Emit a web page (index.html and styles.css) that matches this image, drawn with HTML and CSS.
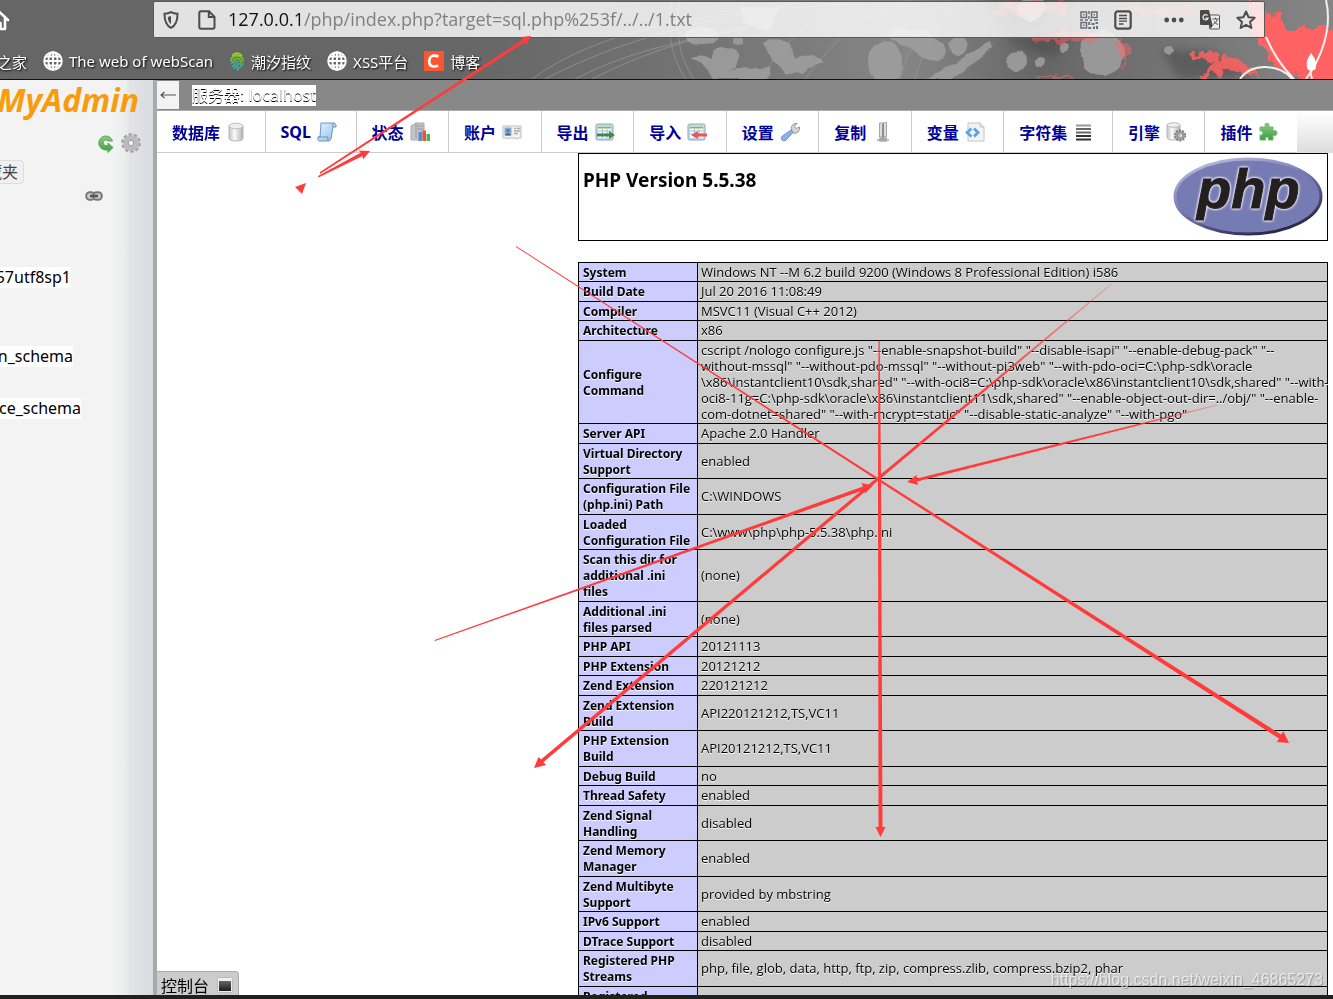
FILE: index.html
```html
<!DOCTYPE html>
<html lang="zh-CN">
<head>
<meta charset="utf-8">
<title>phpMyAdmin</title>
<link rel="stylesheet" href="styles.css">
</head>
<body>
<svg class="defs" width="0" height="0" aria-hidden="true">
  <defs>
    <linearGradient id="metal" x1="0" x2="1" y1="0" y2="0"><stop offset="0" stop-color="#c4c4c4"/><stop offset=".4" stop-color="#fafafa"/><stop offset="1" stop-color="#b0b0b0"/></linearGradient>
    <linearGradient id="blue" x1="0" x2="1" y1="0" y2="1"><stop offset="0" stop-color="#e8f3fd"/><stop offset="1" stop-color="#8fbdea"/></linearGradient>
    <linearGradient id="green" x1="0" x2="0" y1="0" y2="1"><stop offset="0" stop-color="#8ccf84"/><stop offset="1" stop-color="#3f9a3f"/></linearGradient>
    <symbol id="globe" viewBox="0 0 20 20"><g fill="none" stroke="#fff" stroke-width="1.900"><circle cx="10" cy="10" r="8.800"/><ellipse cx="10" cy="10" rx="4.600" ry="8.800"/><path d="M10 1v18M1 10h18M2.800 5.500h14.400M2.800 14.500h14.400"/></g></symbol>
    <symbol id="sheet" viewBox="0 0 20 20"><rect x="1" y="2" width="17" height="16" rx="1.500" fill="#c3d6ea" stroke="#88a9cb"/><rect x="3" y="4" width="13" height="12" fill="#fff"/><path d="M3 5.500h13" stroke="#83b95e" stroke-width="2"/><path d="M3 9h13M3 12h13M7.500 7v9M12 7v9" stroke="#9ebcdb"/></symbol>
  </defs>
</svg>

<header class="browser">
  <svg class="art" viewBox="0 0 1333 79" preserveAspectRatio="xMaxYMin slice" aria-hidden="true">
    <defs>
      <linearGradient id="haze" x1="0" x2="1" y1="0" y2="0"><stop offset="0" stop-color="#666"/><stop offset=".34" stop-color="#666"/><stop offset=".52" stop-color="#737373"/><stop offset=".68" stop-color="#858585"/><stop offset=".78" stop-color="#666"/><stop offset="1" stop-color="#858585"/></linearGradient>
      <filter id="rough" x="-20%" y="-20%" width="140%" height="140%"><feTurbulence type="fractalNoise" baseFrequency=".06" numOctaves="2" seed="4"/><feDisplacementMap in="SourceGraphic" scale="7" xChannelSelector="R" yChannelSelector="G"/></filter>
      <filter id="torn" x="-20%" y="-20%" width="140%" height="140%"><feTurbulence type="fractalNoise" baseFrequency=".12" numOctaves="3" seed="7"/><feDisplacementMap in="SourceGraphic" scale="16" xChannelSelector="R" yChannelSelector="G"/><feGaussianBlur stdDeviation=".7"/></filter>
      <filter id="soft"><feGaussianBlur stdDeviation="4"/></filter>
    </defs>
    <rect width="1333" height="79" fill="url(#haze)"/>
    <path d="M985 0l95 0-50 30-20 10zM1005 42l70-15-20 30zM1180 79l-20-29 50 0 45 29z" fill="#444" opacity=".5" filter="url(#soft)"/>
    <g fill="none" stroke="#a0a0a0" opacity=".6">
      <path d="M532 79C600 30 700 10 860 4M545 79C640 30 720 20 800 2M575 79C640 45 700 40 780 18M592 79c60-30 100-40 150-50M672 0c-6 30 0 60 14 79M680 0c-6 30 0 60 14 79M760 79C800 20 830 10 850 0M805 79C850 20 880 5 930-5M900 79c10-40 30-60 60-90M915 79c10-40 30-60 60-90"/>
    </g>
    <g fill="#a0a0a0" opacity=".85" filter="url(#rough)">
      <ellipse cx="702" cy="36" rx="16" ry="10"/><circle cx="738" cy="41" r="5"/><path d="M692 57q8-4 20 2q0-12 12-13q16 0 13 18q0 6-14 7l34-4 14 1-3 11h-54q-8-14-22-22z"/><path d="M764 43q14-9 24-1l8 15 16-2 12 8-16 4-5 6-16 1-16-14z"/><ellipse cx="885" cy="62" rx="17" ry="21"/><path d="M890 30q30-4 46 8q18 14 6 20q-12 4-22-3l-30-16z"/><circle cx="958" cy="46" r="9"/><path d="M978 48l12-6 2 6-39 31h-26z"/><circle cx="1017" cy="61" r="10"/><circle cx="1040" cy="63" r="5"/><circle cx="1064" cy="48" r="5"/><circle cx="1102" cy="53" r="22"/><circle cx="1168" cy="51" r="5"/>
      <circle cx="1032" cy="8" r="13"/><path d="M740 8h40l-10 22-28-8z"/>
    </g>
    <g fill="#ff6262" filter="url(#torn)">
      <path d="M1000 2h70l-5 12-55 0-20 3z" opacity=".45"/><path d="M1025 38l40-8 40 3-8 8-40 1zM1110 8h115l-40 8-60-4z" opacity=".5"/>
      <path d="M1250 0q26 16 40 28l50 0v58h-34l-8-10-22-8-12-20-14-18z"/><path d="M1188 52l30 2 22 8 22 16-18-4-16-4-28 10 4-9 10-7-26-8z" opacity=".85"/>
      <path d="M1032 80l30-5 25 6zM1115 36l16 12-6 20z" opacity=".5"/>
    </g>
    <g fill="none" stroke="#f0f0f0" stroke-width="2"><path d="M1326 0c7 30-6 60-20 79M1266 37q10 24 28 42M1240 79c12-17 40-15 52 0M1312 79q-3-10-1-20"/></g>
    <path d="M1311 53q8 10 4 17h-7q-4-7 3-17z" fill="#fff"/>
  </svg>

  <div class="toolbar">
    <a class="home" href="#" aria-label="主页"><svg width="22" height="22" viewBox="0 0 22 22"><path d="M2 11l9-8.500 9 8.500M5 9.500V20h4.500v-6h3v6H17V9.500" fill="none" stroke="#fff" stroke-width="2.600" stroke-linejoin="round" stroke-linecap="round"/></svg></a>
    <div class="urlbox">
      <svg width="16" height="18" viewBox="0 0 16 18"><path d="M8 1.200c2 1.200 4 1.500 6.500 1.500C14.500 10 13 14.500 8 16.800 3 14.500 1.500 10 1.500 2.700 4 2.700 6 2.400 8 1.200z" fill="none" stroke="#4d4d4d" stroke-width="2"/><path d="M8 5v8c-2.200-1.500-3-3.500-3.200-7z" fill="#4d4d4d"/></svg>
      <svg class="page-ico" width="18" height="20" viewBox="0 0 18 20"><path d="M3 1.300h8l5.500 5.500V17q0 1.700-1.700 1.700H3Q1.300 18.700 1.300 17V3Q1.300 1.300 3 1.300zM10.800 1.500V7h5.500" fill="none" stroke="#4d4d4d" stroke-width="2"/></svg>
      <div class="url" role="textbox" aria-label="地址"><span class="host">127.0.0.1</span>/php/index.php?target=sql.php%253f/../../1.txt</div>
      <div class="tools">
        <button aria-label="二维码"><svg width="18" height="18" viewBox="0 0 18 18"><g fill="none" stroke="#6a707a" stroke-width="1.500"><path d="M1 1h5.500v5.500H1zM11.500 1H17v5.500h-5.500zM1 11.500h5.500V17H1z"/></g><path d="M3 3h1.500v1.500H3zM13.500 3H15v1.500h-1.500zM3 13.500h1.500V15H3zM8.200 0h1.500v3H8.200zM8.200 5h1.500v3H8.200zM0 8.200h3v1.500H0zM5 8.200h3v1.500H5zM10 8.200h2v2h-2zM14 8.200h4v1.500h-4zM8.200 11h2v3h-2zM11.500 12h3v2h-3zM15.500 11H18v2h-2.500zM8.200 16h3v2h-3zM13 15.500h2V18h-2zM16 15h2v3h-2z" fill="#6a707a"/></svg></button>
        <button aria-label="阅读模式"><svg width="18" height="20" viewBox="0 0 18 20"><rect x="1.300" y="1.300" width="15.400" height="17.400" rx="2.500" fill="none" stroke="#4d4d4d" stroke-width="2.200"/><path d="M5 5.500h8M5 8.500h8M5 11.200h8M5 14h4.500" stroke="#4d4d4d" stroke-width="1.300"/></svg></button>
        <button class="dots" aria-label="更多"><svg width="20" height="6" viewBox="0 0 20 6"><circle cx="2.700" cy="3" r="2.400" fill="#4d4d4d"/><circle cx="10" cy="3" r="2.400" fill="#4d4d4d"/><circle cx="17.300" cy="3" r="2.400" fill="#4d4d4d"/></svg></button>
        <button aria-label="翻译"><svg width="20" height="20" viewBox="0 0 20 20"><rect x="9.500" y="5" width="10" height="14" rx="1" fill="#ececec" stroke="#555"/><path d="M1 0h8l3.500 15H1Q0 15 0 14V1Q0 0 1 0z" fill="#4a4a4a"/><path d="M10 15h3l-2.500 4z" fill="#333"/><path d="M7.500 5.500A2.600 2.600 0 1 0 8 8.200H5.500" fill="none" stroke="#eee" stroke-width="1.300"/><path d="M12.500 9h6M15.500 7.500V9M17.500 9q-.8 4-4.500 5.500M14 11q1.500 3 4 3.500" fill="none" stroke="#555"/></svg></button>
        <button aria-label="收藏"><svg width="20" height="20" viewBox="0 0 20 20"><path d="M10 1.500l2.500 5.700 6.200.6-4.700 4.100 1.400 6.100L10 14.800 4.600 18 6 11.900 1.300 7.800l6.200-.6z" fill="none" stroke="#4d4d4d" stroke-width="2" stroke-linejoin="round"/></svg></button>
      </div>
    </div>
  </div>

  <nav class="bookmarks" aria-label="书签">
    <a class="first" href="#">之家</a>
    <a href="#"><svg width="20" height="20"><use href="#globe"/></svg>The web of webScan</a>
    <a href="#"><svg width="16" height="20" viewBox="0 0 16 20"><g fill="none" stroke-width="1.500"><path d="M3 4.500q5-5 10 0M2 8q6-8 12 0" stroke="#b3cf19"/><path d="M2 11q0-6 6-6t6 6M4.200 12q0-4.500 3.800-4.500t3.800 4.500" stroke="#6fc22e"/><path d="M2 13q1.500-.5 2-2M6 13q0-3 2-3t2 4M8 12v5M12 12q0 2-1 5M14 12q0 2-.8 3" stroke="#3fb67a"/><path d="M3 15.500q2-.5 3-2.500M5 18q1-1 1.500-3M8 19.500l2-3" stroke="#2fb4c4"/></g></svg>潮汐指纹</a>
    <a href="#"><svg width="20" height="20"><use href="#globe"/></svg>XSS平台</a>
    <a href="#"><svg width="20" height="20" viewBox="0 0 20 20"><rect width="20" height="20" fill="#fc5531"/><path d="M14.500 5.500Q6 2.500 5.200 10q-.3 7.500 9 4.800" fill="none" stroke="#fff" stroke-width="2.600"/></svg>博客</a>
  </nav>
</header>

<div class="app">
  <aside class="side">
    <div class="logo">MyAdmin</div>
    <div class="side-icons">
      <button aria-label="刷新"><svg width="18" height="20" viewBox="0 0 18 20"><path d="M15.500 8A7 7 0 1 0 8 17h3v2.500l5-5-5-4.500v2.500H8.500A2.800 2.800 0 1 1 11.200 8z" fill="url(#green)" stroke="#5ba75b"/></svg></button>
      <button aria-label="设置"><svg width="20" height="20" viewBox="0 0 20 20"><circle cx="10" cy="10" r="8.500" fill="none" stroke="#a0a0a0" stroke-width="2.600" stroke-dasharray="3.340 2"/><circle cx="10" cy="10" r="5.500" fill="none" stroke="#bcbcbc" stroke-width="5"/><circle cx="10" cy="10" r="2.800" fill="#f3f3f3" stroke="#999"/></svg></button>
    </div>
    <div class="fav"><button>收藏夹</button></div>
    <div class="link"><svg width="18" height="10" viewBox="0 0 18 10"><rect x="1.200" y="1.200" width="8.500" height="7.600" rx="3.600" fill="#ccc" stroke="#777" stroke-width="2"/><rect x="8.300" y="1.200" width="8.500" height="7.600" rx="3.600" fill="#ccc" stroke="#777" stroke-width="2"/><path d="M5 5h8" stroke="#555" stroke-width="2.600"/></svg></div>
    <ul class="dbs">
      <li class="db-a"><a href="#">57utf8sp1</a></li>
      <li class="db-b"><a href="#">n_schema</a></li>
      <li class="db-c"><a href="#">ce_schema</a></li>
    </ul>
  </aside>

  <main class="main">
    <div class="crumbs"><button class="back" aria-label="后退"><svg width="16" height="8" viewBox="0 0 16 8"><path d="M1 4h15M4.500 1L1 4l3.500 3" fill="none" stroke="#555" stroke-width="1.200"/></svg></button><a href="#">服务器: localhost</a></div>

    <div class="tabbar">
      <ul class="tabs">
        <li><a href="#">数据库<svg width="20" height="20" viewBox="0 0 20 20"><path d="M3 4v12q0 3 7 3t7-3V4z" fill="url(#metal)" stroke="#b5b5b5"/><ellipse cx="10" cy="4" rx="7" ry="2.800" fill="#eee" stroke="#bbb"/></svg></a></li>
        <li><a href="#">SQL<svg width="20" height="20" viewBox="0 0 20 20"><path d="M4 1h13q3 1 2 4h-3l-2 12q-1 2-3 2H2q-2-1-1-4h2z" fill="url(#blue)" stroke="#6796c4"/><path d="M16 5q-1-3 1-4M1 15h10q-1 4 1 4" fill="none" stroke="#6796c4"/></svg></a></li>
        <li><a href="#">状态<svg width="20" height="20" viewBox="0 0 20 20"><path d="M1 4l5-3h8v15l-4 2H1z" fill="#c4c4c4" stroke="#aaa"/><path d="M6 1v15M7 4h6M7 7h6" stroke="#999"/><path d="M8.500 10h3.500v9H8.500z" fill="#4f8fe0"/><path d="M12.500 8.500H16V19h-3.500z" fill="#f0503a"/><path d="M16.500 12H20v7h-3.500z" fill="#4cae4c"/></svg></a></li>
        <li><a href="#">账户<svg width="20" height="20" viewBox="0 0 20 20"><path d="M1 4h18v12h-3l-1 1-2-1H7l-1 1-2-1H1z" fill="#f2f2f2" stroke="#bdbdbd"/><rect x="2.500" y="5.500" width="7" height="8" fill="#75aee8"/><circle cx="6" cy="8.500" r="1.800" fill="#a86b3c"/><path d="M3 13.500q3-5 6 0z" fill="#3b669d"/><path d="M12 6.500h2M15 6.500h3M12 9h6M12 11.500h4" stroke="#aaa" stroke-width="1.500"/></svg></a></li>
        <li><a href="#">导出<svg width="20" height="20" viewBox="0 0 20 20"><use href="#sheet"/><path d="M2 11.500h12V9l6 4-6 4v-2.500H2z" fill="#438a46"/></svg></a></li>
        <li><a href="#">导入<svg width="20" height="20" viewBox="0 0 20 20"><use href="#sheet"/><path d="M20 11.500h-9V9l-7 4 7 4v-2.500h9z" fill="#ee5555"/></svg></a></li>
        <li><a href="#">设置<svg width="20" height="20" viewBox="0 0 20 20"><path d="M12 9a5 5 0 0 1 3-7.500l2 0-2.500 3 1.500 2 3.500-1.500a5 5 0 0 1-6.500 6z" fill="#d4d4d4" stroke="#999"/><path d="M11 8l2 2.500-7.500 8q-2 1-4-1-.8-2 .7-3.300z" fill="#8bb1ec" stroke="#6590d0"/></svg></a></li>
        <li><a href="#">复制<svg width="20" height="20" viewBox="0 0 20 20"><path d="M7.500 1h3v14h-3zM11.500 0h3v15h-3z" fill="#ddd" stroke="#a5a5a5"/><path d="M11 2v16" stroke="#777"/><path d="M5 18h12M8 16h6v3H8z" stroke="#aaa" stroke-width="1.500" fill="#999"/></svg></a></li>
        <li><a href="#">变量<svg width="20" height="20" viewBox="0 0 20 20"><path d="M3 1h12l4 4v14H3z" fill="#f3f3f3" stroke="#c4c4c4"/><path d="M15 1v4h4" fill="none" stroke="#c4c4c4"/><path d="M6.500 6.500L2 10.500l4.500 4M9 6.500l4 4-4 4" fill="none" stroke="#57a3ea" stroke-width="2.800"/></svg></a></li>
        <li><a href="#">字符集<svg width="20" height="20" viewBox="0 0 20 20"><path d="M3 3.500h15" stroke="#999" stroke-width="2"/><path d="M3 7h15M3 10.500h15" stroke="#666" stroke-width="2"/><path d="M3 14h15M3 17.500h15" stroke="#333" stroke-width="2"/></svg></a></li>
        <li><a href="#">引擎<svg width="20" height="20" viewBox="0 0 20 20"><path d="M1 3v12q0 3 6 3t7-3V3z" fill="url(#metal)" stroke="#b5b5b5"/><ellipse cx="7.500" cy="3" rx="6.500" ry="2.300" fill="#eee" stroke="#bbb"/><circle cx="14" cy="13.500" r="5.200" fill="none" stroke="#777" stroke-width="1.800" stroke-dasharray="2.100 1.160"/><circle cx="14" cy="13.500" r="3.300" fill="none" stroke="#999" stroke-width="2.800"/></svg></a></li>
        <li><a href="#">插件<svg width="20" height="20" viewBox="0 0 20 20"><path d="M2 5h5.500Q6 1.500 9 1.200 12 1.500 10.500 5H15v4q4-1.500 4 2t-4 2v5h-4.500q1-3-1.500-3t-1.500 3H2v-5q3 1 3-2T2 9z" fill="url(#green)" stroke="#6fb96b"/></svg></a></li>
      </ul>
    </div>

    <div class="content">
      <div class="phpinfo">
        <div class="title"><h1>PHP Version 5.5.38</h1>
          <svg width="150" height="80" viewBox="0 0 150 80" role="img" aria-label="PHP">
            <defs><linearGradient id="rim" x1=".2" y1="0" x2=".8" y2="1"><stop offset="0" stop-color="#b9bddc"/><stop offset=".45" stop-color="#7478b4"/><stop offset="1" stop-color="#1d1d38"/></linearGradient></defs>
            <ellipse cx="75" cy="39.500" rx="73" ry="37.500" fill="#777bb3" stroke="url(#rim)" stroke-width="3"/>
            <text class="php-word" x="24" y="51">php</text>
          </svg>
        </div>
        <table>
          <colgroup><col class="key"><col></colgroup>
          <tbody>
          <tr><th scope="row">System</th><td>Windows NT --M 6.2 build 9200 (Windows 8 Professional Edition) i586</td></tr>
          <tr><th scope="row">Build Date</th><td>Jul 20 2016 11:08:49</td></tr>
          <tr><th scope="row">Compiler</th><td>MSVC11 (Visual C++ 2012)</td></tr>
          <tr><th scope="row">Architecture</th><td>x86</td></tr>
          <tr><th scope="row">Configure<br>Command</th><td>cscript /nologo configure.js "--enable-snapshot-build" "--disable-isapi" "--enable-debug-pack" "--<br>without-mssql" "--without-pdo-mssql" "--without-pi3web" "--with-pdo-oci=C:\php-sdk\oracle<br>\x86\instantclient10\sdk,shared" "--with-oci8=C:\php-sdk\oracle\x86\instantclient10\sdk,shared" "--with-<br>oci8-11g=C:\php-sdk\oracle\x86\instantclient11\sdk,shared" "--enable-object-out-dir=../obj/" "--enable-<br>com-dotnet=shared" "--with-mcrypt=static" "--disable-static-analyze" "--with-pgo"</td></tr>
          <tr><th scope="row">Server API</th><td>Apache 2.0 Handler</td></tr>
          <tr><th scope="row">Virtual Directory<br>Support</th><td>enabled</td></tr>
          <tr><th scope="row">Configuration File<br>(php.ini) Path</th><td>C:\WINDOWS</td></tr>
          <tr><th scope="row">Loaded<br>Configuration File</th><td>C:\www\php\php-5.5.38\php.ini</td></tr>
          <tr><th scope="row">Scan this dir for<br>additional .ini<br>files</th><td>(none)</td></tr>
          <tr><th scope="row">Additional .ini<br>files parsed</th><td>(none)</td></tr>
          <tr><th scope="row">PHP API</th><td>20121113</td></tr>
          <tr><th scope="row">PHP Extension</th><td>20121212</td></tr>
          <tr><th scope="row">Zend Extension</th><td>220121212</td></tr>
          <tr><th scope="row">Zend Extension<br>Build</th><td>API220121212,TS,VC11</td></tr>
          <tr><th scope="row">PHP Extension<br>Build</th><td>API20121212,TS,VC11</td></tr>
          <tr><th scope="row">Debug Build</th><td>no</td></tr>
          <tr><th scope="row">Thread Safety</th><td>enabled</td></tr>
          <tr><th scope="row">Zend Signal<br>Handling</th><td>disabled</td></tr>
          <tr><th scope="row">Zend Memory<br>Manager</th><td>enabled</td></tr>
          <tr><th scope="row">Zend Multibyte<br>Support</th><td>provided by mbstring</td></tr>
          <tr><th scope="row">IPv6 Support</th><td>enabled</td></tr>
          <tr><th scope="row">DTrace Support</th><td>disabled</td></tr>
          <tr><th scope="row">Registered PHP<br>Streams</th><td>php, file, glob, data, http, ftp, zip, compress.zlib, compress.bzip2, phar</td></tr>
          <tr><th scope="row">Registered</th><td></td></tr>
          </tbody>
        </table>
      </div>
    </div>

    <button class="console">控制台<svg width="16" height="16" viewBox="0 0 16 16"><defs><linearGradient id="scr" x1="0" y1="0" x2="0" y2="1"><stop offset="0" stop-color="#666"/><stop offset="1" stop-color="#1c1c1c"/></linearGradient></defs><rect x=".5" y=".5" width="15" height="15" rx="1" fill="#eee" stroke="#bbb"/><rect x="2" y="4" width="12" height="10" fill="url(#scr)"/></svg></button>
  </main>
</div>
<div class="taskbar"></div>

<div class="watermark">https://blog.csdn.net/weixin_46865273</div>

<svg class="marks" width="1333" height="999" viewBox="0 0 1333 999" aria-hidden="true">
  <defs>
    <linearGradient id="fade1" gradientUnits="userSpaceOnUse" x1="1112" y1="284" x2="990" y2="387"><stop offset="0" stop-color="#ff3b3b" stop-opacity=".2"/><stop offset="1" stop-color="#ff3b3b"/></linearGradient>
    <linearGradient id="fade2" gradientUnits="userSpaceOnUse" x1="1220" y1="404" x2="1130" y2="426"><stop offset="0" stop-color="#ff3b3b" stop-opacity=".3"/><stop offset="1" stop-color="#ff3b3b"/></linearGradient>
  </defs>
  <g fill="#ff3b3b">
    <path d="M320 172L523 39.500l-2-2.500 10-1-5 9-1.500-2.500L320 174z"/>
    <path d="M318 176L361 152.500l-3-2 12 .5-7 8.500-.5-3.500L318.500 177.500z"/>
    <path d="M295 187l11-4-4 11z"/>
    <path d="M516 246L878 478l403 256.500 2.500-3 5.500 11.500-12-1 2-3.500L877 480 516 247z"/>
    <path d="M878.500 341h1.200L881 479l1.500 348h3L880.500 837l-5-10h3L878 479z"/>
    <path d="M434.500 640L863 486.500l-1.500-3.500 11.500 2.500-8 8-1-3.500L435 641z"/>
  </g>
  <path fill="url(#fade1)" d="M1110.500 284l.8 1L880 479 543.500 762l2.500 3-12 3 4.500-11 2.500 2.500L877 477.500z"/>
  <path fill="url(#fade2)" d="M1217 404.500v1L917 481.500l1 3.500-11-3 9.500-7 .5 3.500z"/>
</svg>
</body>
</html>
```
FILE: styles.css
```css
* { box-sizing: border-box; }
body {
  margin: 0;
  height: 100vh;
  display: flex;
  flex-direction: column;
  overflow: hidden;
  position: relative;
  background: #fff;
  color: #000;
  font-family: "Noto Sans", "Noto Sans CJK SC", sans-serif;
  font-size: 16px;
}
ul { list-style: none; margin: 0; padding: 0; }
a { color: inherit; text-decoration: none; }
button { border: 0; padding: 0; margin: 0; background: none; font: inherit; color: inherit; display: flex; }
svg { flex: none; display: block; }
.defs { position: absolute; }

/* browser chrome */
.browser { position: relative; flex: none; height: 80px; border-bottom: 1px solid #111; background: #666; }
.art { position: absolute; inset: 0; width: 100%; height: 100%; }
.toolbar { position: relative; display: flex; align-items: center; height: 39px; padding-right: 68px; }
.home { flex: none; width: 153px; display: flex; }
.home svg { margin-left: -12px; }
.urlbox {
  flex: 1;
  display: flex;
  align-items: center;
  height: 37px;
  padding: 0 8px 0 9px;
  border: 1px solid #5a5a5a;
  border-radius: 2px;
  background: rgba(255, 255, 255, .81);
}
.page-ico { margin-left: 19px; }
.url { flex: 1; margin-left: 12px; font-family: "Open Sans", sans-serif; font-size: 18px; line-height: 24px; padding-bottom: 2px; color: #808080; white-space: nowrap; }
.host { color: #111; }
.tools { display: flex; align-items: center; gap: 16px; }
.tools .dots { margin-left: 16px; }

.bookmarks { position: relative; display: flex; align-items: center; height: 40px; gap: 16px; padding-top: 4px; color: #fff; font-size: 15px; text-shadow: 1px 1px 2px #000; }
.bookmarks a { display: flex; align-items: center; gap: 6px; white-space: nowrap; }
.bookmarks .first { width: 27px; justify-content: flex-end; }

/* application */
.app { flex: 1; min-height: 0; display: flex; }
.side {
  flex: none;
  width: 157px;
  overflow: hidden;
  border-right: 4px solid #aaa;
  background: linear-gradient(to right, #f3f3f3 110px, #eceeee 125px, #e2e4e7 130px, #d8dbdf 153px);
}
.logo { display: flex; justify-content: flex-end; padding-right: 14px; height: 46px; line-height: 40px; font-family: "Open Sans", sans-serif; font-size: 32px; font-weight: 700; font-style: italic; color: #f89c0e; }
.side-icons { display: flex; justify-content: flex-end; align-items: center; gap: 6px; height: 34px; padding-right: 12px; }
.fav { display: flex; justify-content: flex-end; width: 24px; }
.fav button { flex: none; padding: 0 5px; border: 1px solid #ddd; border-radius: 4px; background: #f0f0f0; line-height: 22px; color: #444; }
.link { display: flex; justify-content: flex-end; padding: 7px 50px 0 0; }
.dbs li { display: flex; justify-content: flex-end; }
.dbs a { background: #fff; line-height: 21px; }
.dbs .db-a { padding: 66px 82px 0 0; }
.dbs .db-b { padding: 58px 80px 0 0; }
.dbs .db-c { padding: 31px 72px 0 0; }

.main { flex: 1; min-width: 0; position: relative; display: flex; flex-direction: column; overflow: hidden; }
.crumbs { flex: none; display: flex; align-items: center; gap: 13px; height: 31px; background: #888; border-bottom: 1px solid #aaa; }
.back { width: 22px; height: 28px; align-items: center; justify-content: center; background: #f3f3f3; }
.crumbs a { background: #fff; color: #fff; line-height: 21px; text-shadow: 0 1px 0 #000; }
.tabbar { flex: none; padding-right: 36px; background: linear-gradient(#fff, #ddd); }
.tabs { display: flex; }
.tabs li { flex: 1 0 auto; border-right: 1px solid #ccc; border-bottom: 1px solid #ccc; background: #fff; }
.tabs li:last-child { border-right: 0; }
.tabs a { display: flex; align-items: center; gap: 6px; height: 41px; padding: 0 18px 0 15px; color: #009; font-weight: 700; }
.content { flex: 1; min-height: 0; overflow: hidden; padding-right: 5px; }
.phpinfo { max-width: 750px; margin: 0 0 0 auto; }
.title { display: flex; justify-content: space-between; height: 88px; margin-bottom: 21px; padding: 3px 4px; border: 1px solid #000; }
h1 { margin: 11px 0 0; font-size: 19px; line-height: 24px; }
.php-word { font-family: "Liberation Sans", sans-serif; font-weight: 700; font-style: italic; font-size: 56px; fill: #231f20; stroke: #231f20; stroke-width: 1px; filter: drop-shadow(0 0 1px #fff) drop-shadow(0 0 1px #fff); }
table { width: 100%; table-layout: fixed; border-collapse: collapse; font-size: 12px; line-height: 16px; text-shadow: 0 1px 0 #fff; }
.key { width: 119px; }
th, td { border: 1px solid #000; text-align: left; vertical-align: middle; white-space: nowrap; }
th { padding: 2px 4px 0; background: #ccf; }
td { padding: 1px 3px; background: #ccc; font-family: "Open Sans", sans-serif; font-size: 13px; }
tr:nth-child(even) th { padding-bottom: 1px; }
tr:nth-child(even) td { padding-bottom: 2px; }
.console { position: absolute; left: 0; bottom: 0; align-items: center; gap: 8px; height: 24px; padding: 2px 5px 0 4px; border: 1px solid #aaa; border-width: 1px 1px 0 0; border-radius: 0 4px 0 0; background: #ccc; }
.taskbar { flex: none; height: 4px; background: #231f1a; }
.watermark { position: absolute; right: 10px; bottom: 9px; font-family: "Liberation Sans", sans-serif; font-size: 16px; line-height: 20px; color: rgba(255, 255, 255, .65); text-shadow: 1px 1px 1px rgba(0, 0, 0, .25); }
.marks { position: absolute; left: 0; top: 0; pointer-events: none; }
```
